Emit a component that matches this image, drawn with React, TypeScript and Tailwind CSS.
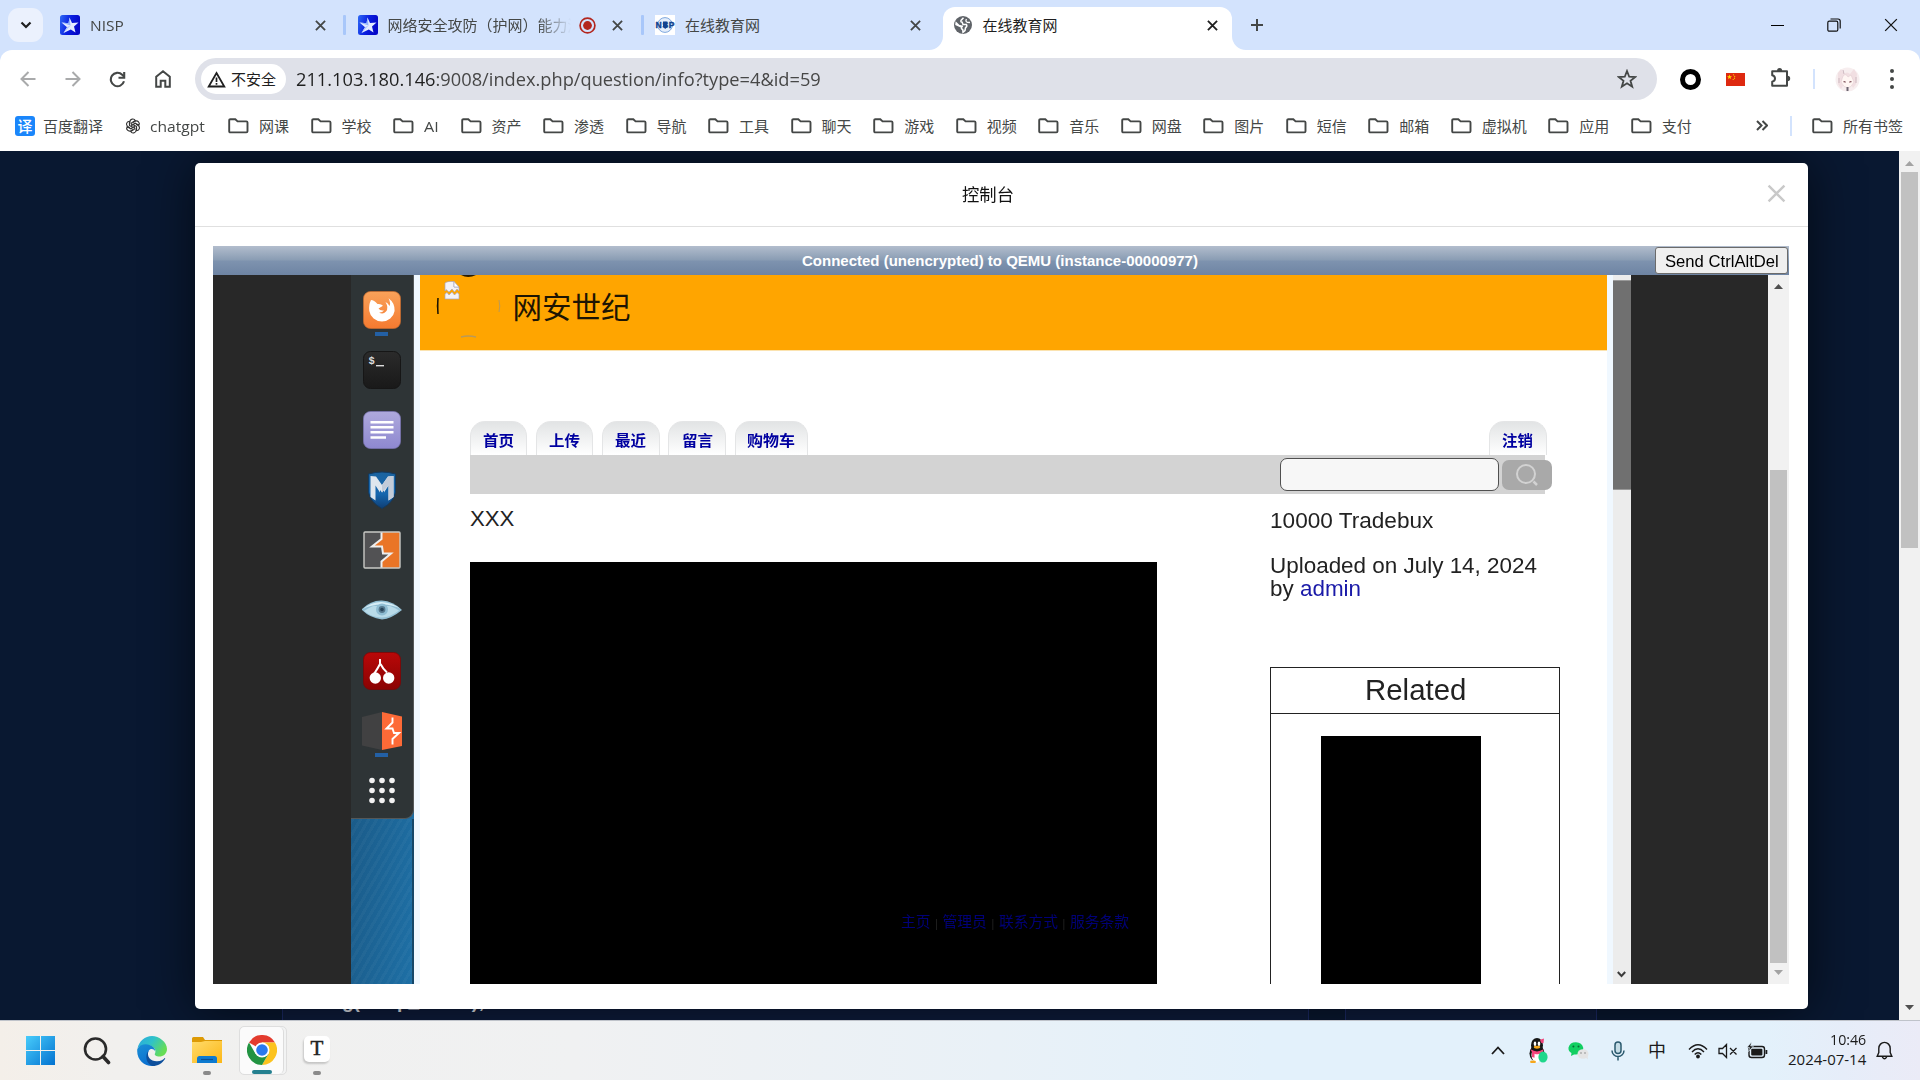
import React, { useLayoutEffect, useRef, useState } from "react";

type Kids = { children?: React.ReactNode };

/** A single line of text that is squeezed or stretched to a fixed width. */
function Fit({ w, className = "", children }: Kids & { w: number; className?: string }) {
  const ref = useRef<HTMLSpanElement>(null);
  const [s, setS] = useState(1);
  useLayoutEffect(() => {
    if (ref.current && ref.current.offsetWidth) setS(w / ref.current.offsetWidth);
  }, [w]);
  return (
    <span className={"block shrink-0 whitespace-nowrap " + className} style={{ width: w }}>
      <span ref={ref} className="inline-block origin-left whitespace-pre" style={{ transform: `scaleX(${s})` }}>
        {children}
      </span>
    </span>
  );
}

const Cross = ({ size = 11, sw = 2, color = "#444746" }: { size?: number; sw?: number; color?: string }) => (
  <svg width={size} height={size} viewBox="0 0 12 12" className="shrink-0">
    <path d="M1 1 11 11M11 1 1 11" stroke={color} strokeWidth={sw} />
  </svg>
);

const StarLogo = () => (
  <svg width="20" height="20" viewBox="0 0 20 20" className="shrink-0">
    <defs>
      <linearGradient id="sl" x1="0" y1="0" x2="1" y2="0.3">
        <stop offset="0" stopColor="#2f6bf5" />
        <stop offset="0.55" stopColor="#0a1fe0" />
        <stop offset="1" stopColor="#0508c8" />
      </linearGradient>
    </defs>
    <rect width="20" height="20" rx="2.5" fill="url(#sl)" />
    <path d="M9.500 2.500 12 8 18.500 7.500 14 11.500 15.500 17.500 10.800 14.500 3.500 18 7 12.200 1.500 7.500 8.500 8.300Z" fill="#e3ebff" />
    <path d="M9.500 2.500 10.500 10.600 1.500 7.500 8.500 8.300Z" fill="#8fb2ff" />
    <path d="M10.500 10.600 3.500 18 7 12.200Z" fill="#a9c2ff" />
  </svg>
);

const NopLogo = () => (
  <svg width="20" height="20" viewBox="0 0 20 20" className="shrink-0">
    <rect width="20" height="20" fill="#fff" />
    <circle cx="10" cy="10" r="7.4" fill="#e4eefb" stroke="#7fa8de" strokeWidth="1" />
    <path d="M8 6.5h4.400v5L10.200 14 8 11.500z" fill="#12438f" />
    <text x="0.5" y="13" fontSize="8.5" fontWeight="900" fill="#12438f" stroke="#12438f" strokeWidth=".4" fontFamily="Liberation Sans, sans-serif" textLength="19">
      NSP
    </text>
  </svg>
);

const Globe = () => (
  <svg width="18" height="18" viewBox="0 0 18 18" className="mx-px shrink-0">
    <circle cx="9" cy="9" r="9" fill="#5f6368" />
    <path d="M9.500 1.800 7 4.500Q6.500 6.200 8.200 6.300L9 8.500H12.500Q13.500 10.500 11.500 11.800L11 14.500 9 16.200 8.700 13.500Q7 13 7.500 11L2 8.500 2.200 6.800 5 9.500 9 10.500" fill="#fff" fillOpacity="0" stroke="#fff" strokeWidth="1.500" />
    <path d="M12.500 3.200Q11 5.500 13.500 6.300L16 6.500" fill="none" stroke="#fff" strokeWidth="1.300" />
  </svg>
);

function Tab({ icon, title, w, active, sep, children }: Kids & { icon: React.ReactNode; title: string; w: number; active?: boolean; sep?: boolean }) {
  return (
    <div className="flex h-[50px] w-[297.5px] shrink-0 items-end">
      <div
        className={
          "relative flex h-[43px] shrink-0 items-center pb-[7px] " +
          (active ? "ml-[1.5px] w-[289px] rounded-t-[12px] bg-white pl-[9.5px]" : "w-[294px] pl-[11px]")
        }
      >
        {active && (
          <>
            <svg className="absolute bottom-0 -left-[14px]" width="14" height="14">
              <path d="M14 0V14H0A14 14 0 0 0 14 0Z" fill="#fff" />
            </svg>
            <svg className="absolute -right-[14px] bottom-0" width="14" height="14">
              <path d="M0 0V14H14A14 14 0 0 1 0 0Z" fill="#fff" />
            </svg>
          </>
        )}
        {icon}
        <div className="ml-[10px] flex w-[224.5px] shrink-0 items-center">
          <div className={children ? "w-[183px] overflow-hidden [mask-image:linear-gradient(to_right,black_82%,transparent)]" : ""}>
            <Fit w={w} className={"text-[15px] leading-5 " + (active ? "text-[#1f1f1f]" : "text-[#444746]")}>
              {title}
            </Fit>
          </div>
          {children}
        </div>
        <Cross color={active ? "#1f1f1f" : "#444746"} />
      </div>
      {sep && <div className="mb-[15px] h-5 w-[3px] shrink-0 rounded-[1px] bg-[#a8c7fa]" />}
    </div>
  );
}

const FolderIcon = () => (
  <svg width="21" height="16" viewBox="0 0 21 16" className="shrink-0">
    <path d="M1.200 13.200V2.400Q1.200 1.200 2.400 1.200H7.300L9.600 3.400H18.300Q19.500 3.400 19.500 4.600V13.200Q19.500 14.400 18.300 14.400H2.400Q1.200 14.400 1.200 13.200Z" fill="none" stroke="#444746" strokeWidth="1.900" />
  </svg>
);

const Bookmark = ({ t, w }: { t: string; w: number }) => (
  <div className="mr-[21.530px] flex shrink-0 items-center gap-[10px]">
    <FolderIcon />
    <Fit w={w}>{t}</Fit>
  </div>
);

const bookmarks: [string, number][] = [
  ["网课", 30], ["学校", 30], ["AI", 15], ["资产", 30], ["渗透", 30], ["导航", 30], ["工具", 30], ["聊天", 30], ["游戏", 30],
  ["视频", 30], ["音乐", 30], ["网盘", 30], ["图片", 30], ["短信", 30], ["邮箱", 30], ["虚拟机", 45], ["应用", 30], ["支付", 30],
];

/** A box of a given width that centres its content. */
const Slot = ({ w, children, className = "" }: Kids & { w: number; className?: string }) => (
  <div className={"flex h-full shrink-0 items-center justify-center " + className} style={{ width: w }}>
    {children}
  </div>
);

function Browser() {
  return (
    <header className="h-[151px] bg-[#d3e3fd]">
      <div className="flex h-[50px]">
        <div className="mt-2 mr-[6px] ml-2 flex h-[34px] w-[35px] items-center justify-center rounded-[11px] bg-[#ebf1fd]">
          <svg width="12" height="8" viewBox="0 0 12 8">
            <path d="M1.500 1.500 6 6 10.500 1.500" fill="none" stroke="#1f1f1f" strokeWidth="2.200" />
          </svg>
        </div>
        <Tab icon={<StarLogo />} title="NISP" w={34} sep />
        <Tab icon={<StarLogo />} title="网络安全攻防（护网）能力测" w={195} sep>
          <svg width="17" height="17" viewBox="0 0 17 17" className="ml-[8px] shrink-0">
            <circle cx="8.500" cy="8.500" r="7.400" fill="none" stroke="#b3261e" strokeWidth="1.700" />
            <circle cx="8.500" cy="8.500" r="4.400" fill="#b3261e" />
          </svg>
        </Tab>
        <Tab icon={<NopLogo />} title="在线教育网" w={75} />
        <Tab icon={<Globe />} title="在线教育网" w={75} active />
        <div className="ml-[11px] flex items-center">
          <svg width="14" height="14" viewBox="0 0 14 14">
            <path d="M7 1V13M1 7H13" stroke="#444746" strokeWidth="2" />
          </svg>
        </div>
        <div className="ml-auto flex w-[171px] items-center">
          <Slot w={57}><div className="h-px w-[13px] bg-black" /></Slot>
          <Slot w={55}>
            <svg width="14" height="14" viewBox="0 0 14 14" fill="none" stroke="#111" strokeWidth="1.200">
              <rect x="0.800" y="3.200" width="10" height="10" rx="1.500" />
              <path d="M3.500 1H11Q13.200 1 13.200 3.200V10.500" />
            </svg>
          </Slot>
          <Slot w={59}><Cross size={14} sw={1.100} color="#111" /></Slot>
        </div>
      </div>

      <div className="h-[101px] rounded-t-[12px] bg-white">
        <div className="flex h-[50px] items-center pt-[8px]">
          <div className="flex w-[195px] shrink-0 items-center pl-[5px]">
            <Slot w={45}>
              <svg width="16" height="16" viewBox="0 0 16 16" fill="none" stroke="#a9aaab" strokeWidth="2"><path d="M8.500 1 1.500 8l7 7M1.500 8H15.500" /></svg>
            </Slot>
            <Slot w={45}>
              <svg width="16" height="16" viewBox="0 0 16 16" fill="none" stroke="#a9aaab" strokeWidth="2"><path d="M7.500 1l7 7-7 7M14.500 8H.5" /></svg>
            </Slot>
            <Slot w={45}>
              <svg width="17" height="17" viewBox="0 0 17 17" fill="none" stroke="#444746" strokeWidth="2.100"><path d="M15 10.300A6.700 6.700 0 1 1 13.200 3.700L15 5.500" /><path d="M15.200 1V6.700H9.500" /></svg>
            </Slot>
            <Slot w={45}>
              <svg width="16" height="18" viewBox="0 0 16 18" fill="none" stroke="#444746" strokeWidth="2"><path d="M1.200 16.700V6.700L8 1.300 14.800 6.700V16.700H10.300V10.700H5.700V16.700Z" /></svg>
            </Slot>
          </div>
          <div className="flex h-[42px] w-[1462px] shrink-0 items-center rounded-full bg-[#dfe1e9] pl-[6px]">
            <div className="flex h-[30px] w-[85px] items-center rounded-full bg-white pl-[6px]">
              <svg width="19" height="17" viewBox="0 0 19 17">
                <path d="M9.500 2 17.300 15.500H1.700Z" fill="none" stroke="#1f1f1f" strokeWidth="1.800" />
                <path d="M9.500 6.500V11M9.500 12V13.800" stroke="#1f1f1f" strokeWidth="1.700" />
              </svg>
              <Fit w={45} className="ml-[5px] text-[15px] leading-5 text-[#1f1f1f]">不安全</Fit>
            </div>
            <Fit w={525} className="ml-[10px] text-[18px] leading-6 text-[#474747]">
              <span className="text-[#1f1f1f]">211.103.180.146</span>:9008/index.php/question/info?type=4&amp;id=59
            </Fit>
            <svg width="20" height="20" viewBox="0 0 20 20" className="mr-[20px] ml-auto">
              <path d="M10 2 12.200 7.700 18.300 8 13.500 11.800 15.200 17.700 10 14.300 4.800 17.700 6.500 11.800 1.700 8 7.800 7.700Z" fill="none" stroke="#444746" strokeWidth="1.800" />
            </svg>
          </div>
          <div className="flex flex-1 items-center pl-[11px]">
            <Slot w={44}><div className="size-[21px] rounded-full border-[5.500px] border-black bg-white" /></Slot>
            <Slot w={46}>
              <svg width="19" height="13" viewBox="0 0 19 13"><rect width="19" height="13" fill="#de2910" /><path d="M3.500 1.500 4.200 3.300H6L4.500 4.400 5 6.200 3.500 5.100 2 6.200 2.500 4.400 1 3.300H2.800Z" fill="#ffde00" /><circle cx="7.500" cy="1.800" r=".6" fill="#ffde00" /><circle cx="8.700" cy="3.300" r=".6" fill="#ffde00" /><circle cx="8.500" cy="5.200" r=".6" fill="#ffde00" /><circle cx="7.200" cy="6.500" r=".6" fill="#ffde00" /></svg>
            </Slot>
            <Slot w={46}>
              <svg width="22" height="22" viewBox="0 0 22 22" className="mb-1">
                <path d="M2.200 5.200H17V19.800H2.200V15.700Q5 15 5 12.500T2.200 9.300Z" fill="none" stroke="#444746" strokeWidth="2" strokeLinejoin="round" />
                <path d="M7 5A2.600 2.900 0 0 1 12.200 5ZM17.500 9.800A2.700 2.700 0 0 1 17.500 15.200Z" fill="#444746" />
              </svg>
            </Slot>
            <Slot w={20}><div className="h-5 w-[2px] bg-[#d3e3fd]" /></Slot>
            <Slot w={46}>
              <svg width="25" height="25" viewBox="0 0 25 25">
                <circle cx="12.500" cy="12.500" r="12" fill="#f7eeef" />
                <path d="M3 6 6 2 9 7Q12 4 15 7L19 2 22 7 21 17 18 21 16 17H9L6 22 3 17Z" fill="#f1dfe2" />
                <path d="M6 15 8 9Q11 6 13 10L16 8 19 15Q16 21 12.500 21T6 15Z" fill="#fff6f3" stroke="#e3cdd1" strokeWidth=".6" />
                <path d="M8.500 15Q9.500 14 10.500 15.500M14.500 15.500Q15.500 14 16.500 15" stroke="#8a6068" strokeWidth="1.200" fill="none" />
                <path d="M11.500 20H13.500V24H11.500Z" fill="#6b6470" /><path d="M4 11V16M21 10V16M8 3 9 7" stroke="#cdb9c0" strokeWidth="1" />
              </svg>
            </Slot>
            <Slot w={44}>
              <div className="flex flex-col gap-[4px]">
                <i className="size-1 rounded-full bg-[#444746]" /><i className="size-1 rounded-full bg-[#444746]" /><i className="size-1 rounded-full bg-[#444746]" />
              </div>
            </Slot>
          </div>
        </div>
        <div className="flex h-[51px] items-center pl-[15px] text-[15px] leading-5 text-[#444746]">
          <div className="flex size-5 items-center justify-center rounded-[3px] bg-[#1a86fb] text-[15px] font-medium text-white">译</div>
          <Fit w={60} className="ml-2">百度翻译</Fit>
          <svg width="16" height="16" viewBox="0 0 16 16" className="ml-[22px] shrink-0" fill="none" stroke="#333" strokeWidth="1.150">
            {[0, 60, 120, 180, 240, 300].map((a) => (
              <path key={a} transform={`rotate(${a} 8 8)`} d="M4.900 6.200V3.800A2.900 2.900 0 0 1 10.300 2.500L6.700 4.700V8.700" />
            ))}
          </svg>
          <Fit w={55} className="mr-[23px] ml-[9px]">chatgpt</Fit>
          {bookmarks.map(([t, w]) => <Bookmark key={t} t={t} w={w} />)}
          <div className="mr-[17px] ml-auto flex items-center">
            <svg width="12" height="11" viewBox="0 0 12 11" fill="none" stroke="#444746" strokeWidth="2"><path d="M1 1 5.500 5.500 1 10M6.500 1 11 5.500 6.500 10" /></svg>
            <div className="mr-[20px] ml-[22px] h-5 w-[2.500px] bg-[#d3e3fd]" />
            <FolderIcon />
            <Fit w={60} className="ml-[10px]">所有书签</Fit>
          </div>
        </div>
      </div>
    </header>
  );
}

const Arrow = ({ down, c }: { down?: boolean; c: string }) => (
  <svg width="9" height="5" viewBox="0 0 9 5" className="shrink-0"><path d={down ? "M0 0H9L4.500 5Z" : "M0 5H9L4.500 0Z"} fill={c} /></svg>
);

const dockIcons: React.ReactNode[] = [
  <svg key="ff" width="38" height="38" viewBox="0 0 38 38">
    <defs><linearGradient id="ff" x1="0" y1="0" x2="0" y2="1"><stop offset="0" stopColor="#f9a25a" /><stop offset="1" stopColor="#f57a30" /></linearGradient></defs>
    <rect x=".5" y=".5" width="37" height="37" rx="7" fill="url(#ff)" stroke="#c86b2e" strokeWidth=".7" />
    <path d="M8 9Q5.500 14 6.300 20A12.800 12.500 0 0 0 31.600 20Q32 12 25.500 7.300Q28 12 26.500 15Q25 12 22.500 11Q26 17 23 20.500Q20 24 16 21.500Q19 22 21 19.500Q17 20 15.500 17.500L20 14.800Q18 12.500 14.500 13Q11 9 8 9Z" fill="#fff" />
  </svg>,
  <svg key="term" width="38" height="38" viewBox="0 0 38 38">
    <defs><linearGradient id="tm" x1="0" y1="0" x2="0" y2="1"><stop offset="0" stopColor="#2b2b2b" /><stop offset="1" stopColor="#191919" /></linearGradient></defs>
    <rect x=".5" y=".5" width="37" height="37" rx="7" fill="url(#tm)" stroke="#161616" />
    <text x="5.500" y="13" fontSize="10.500" fontWeight="bold" fill="#ddd" fontFamily="Liberation Mono, monospace">$</text>
    <rect x="13" y="14" width="8" height="1.400" fill="#ddd" />
  </svg>,
  <svg key="txt" width="38" height="38" viewBox="0 0 38 38">
    <defs><linearGradient id="tx" x1="0" y1="0" x2="0" y2="1"><stop offset="0" stopColor="#aea9dc" /><stop offset="1" stopColor="#8e88d0" /></linearGradient></defs>
    <rect x=".5" y=".5" width="37" height="37" rx="7" fill="url(#tx)" stroke="#7b76b5" strokeWidth=".7" />
    <path d="M7.500 11.300H30.500M7.500 16.300H30.500M7.500 21.300H30.500M7.500 26.500H23" stroke="#fff" strokeWidth="2.400" />
  </svg>,
  <svg key="msf" width="38" height="38" viewBox="0 0 38 38">
    <defs><linearGradient id="ms" x1="0" y1="0" x2="0" y2="1"><stop offset="0" stopColor="#1b639f" /><stop offset=".6" stopColor="#1666ae" /><stop offset="1" stopColor="#0f3e74" /></linearGradient></defs>
    <path d="M5.500 3Q19-1 32.500 3V21Q31 31 19 37.500Q7 31 5.500 21Z" fill="url(#ms)" stroke="#123a61" />
    <path d="M7.500 5 13 5.500 19 14 25 5.500 30.500 5V26L25.500 29.500V14.500L21 21.500V19L19 21.500 17 19V21.500L12.500 14.500V29.500L7.500 26Z" fill="#dfe6ee" />
    <path d="M25 5.500 30.500 5V26L25.500 29.500V14.500L19 21.500V14Z" fill="#c3cbd8" />
  </svg>,
  <svg key="burp" width="38" height="38" viewBox="0 0 38 38">
    <rect x="1" y="1" width="36" height="36" fill="#525254" />
    <path d="M18.500 1V8L9 15.500H19L20 22.500H28L18.500 30.500V37H37V1Z" fill="#ea7527" />
    <path d="M18.500 1V8L9 15.500H19L20 22.500H28L18.500 30.500V37" fill="none" stroke="#eee" strokeWidth="2" />
    <rect x="1" y="1" width="36" height="36" rx="1" fill="none" stroke="#c9c9c5" strokeWidth="1.400" />
  </svg>,
  <svg key="eye" width="42" height="38" viewBox="0 0 42 38">
    <path d="M1 18Q10 9 21 9.500T41 19Q30 28 21 28.500Q9 27 1 19Z" fill="#93bfd4" />
    <path d="M2 18Q11 10.500 21 11T40 18Q32 13.500 21 13.500T2 18Z" fill="#d7edf6" />
    <path d="M3 20Q11 15 13 15H29Q33 16 38 19.500Q30 26 21 26.500T3 20Z" fill="#b9dbe9" />
    <circle cx="21" cy="18.500" r="6" fill="#8fbdd3" /><circle cx="21" cy="18.500" r="3.400" fill="#55788e" /><circle cx="21" cy="18.500" r="1.800" fill="#27445a" />
  </svg>,
  <svg key="cherry" width="38" height="38" viewBox="0 0 38 38">
    <defs><linearGradient id="ch" x1="0" y1="0" x2="0" y2="1"><stop offset="0" stopColor="#b90808" /><stop offset="1" stopColor="#8a0303" /></linearGradient></defs>
    <rect x=".5" y=".5" width="37" height="37" rx="7" fill="url(#ch)" stroke="#7c0505" strokeWidth=".8" />
    <path d="M17 7V12Q15 16 11 22M17.500 12Q20 17 24 20.500" stroke="#fff" strokeWidth="2" fill="none" />
    <circle cx="12.300" cy="26" r="5.700" fill="#fff" /><circle cx="25.700" cy="26" r="5.700" fill="#fff" />
  </svg>,
  <svg key="burp2" width="42" height="38" viewBox="0 0 42 38">
    <path d="M1 5 21 0V38L1 33.500Z" fill="#414142" />
    <path d="M21 0 41 4.500V34L21 38Z" fill="#fd6a37" />
    <path d="M31.500 5.500V10.500L25.500 16.500H31.500L33 21H38L31.500 27V32.500" fill="none" stroke="#fff" strokeWidth="1.900" />
  </svg>,
  <svg key="grid" width="38" height="38" viewBox="0 0 38 38">
    {[9, 19, 29].map((x) => [8.500, 18.500, 28.500].map((y) => <circle key={x + "-" + y} cx={x} cy={y} r="2.800" fill="#f2f2f2" />))}
  </svg>,
];

const ShopTab = ({ t, w, tw }: { t: string; w: number; tw: number }) => (
  <div className="flex h-[34px] shrink-0 items-center justify-center rounded-t-[15px] border border-b-0 border-[#e4e5e6] bg-gradient-to-b from-[#e2e4e5] to-white pt-[3px] text-[15px] leading-5 font-bold text-[#0000a0]" style={{ width: w }}>
    <Fit w={tw}>{t}</Fit>
  </div>
);

const Bar = () => <span className="text-[11.500px] text-[#262626]"> | </span>;

function RemoteScreen() {
  return (
    <div className="flex h-[709px] overflow-hidden bg-[#282828]">
      <div className="ml-[138px] flex w-[62.500px] shrink-0 flex-col bg-gradient-to-br from-[#184f78] to-[#1e70a6]">
        <div className="flex h-[544px] shrink-0 flex-col items-center overflow-hidden rounded-br-[9px] border-r border-b border-[#545859] bg-[#2e3436] pt-4">
          {dockIcons.map((ic, i) => (
            <div key={i} className="flex h-[60.100px] shrink-0 flex-col items-center">
              {ic}
              {(i === 0 || i === 7) && <div className="mt-[3px] h-1 w-[13px] bg-[#2360a5]" />}
            </div>
          ))}
        </div>
        <div className="flex-1 border-r-2 border-[#164768] bg-[repeating-linear-gradient(120deg,rgba(255,255,255,0.03)_0_3px,transparent_3px_7px)]" />
      </div>
      <div className="w-[6.500px] shrink-0 bg-[#f0f8ff]" />
      <div className="flex w-[1187px] shrink-0 flex-col bg-white">
        <div className="flex h-[76px] shrink-0 items-start overflow-hidden border-b border-[#fbe3b0] bg-[#ffa500]">
          <svg width="80" height="70" viewBox="0 0 80 70" className="ml-[10px] shrink-0">
            <path d="M31 0H46Q38 4 31 0Z" fill="#2a1c00" />
            <path d="M8 23Q6.500 31 8 39Z" fill="#1a1200" stroke="#1a1200" />
            <path d="M69 25Q70.500 31 69 37" fill="none" stroke="#b99a5a" />
            <path d="M31 62Q38 60 46 62" fill="none" stroke="#b99a5a" strokeWidth="1.500" />
            <path d="M15 8Q17 6 24 6.500V12H29V16L27 14 24.500 17 22 14 19 17 16 14.500 15 16ZM15 19 17 17.500 19 20 22 17 24.500 20 27 17.500 29 19V24H15Z" fill="#f4f2f6" stroke="#a7a6c0" strokeWidth=".7" />
            <path d="M24 6.500V12H29Z" fill="#fff" stroke="#a7a6c0" strokeWidth=".7" />
          </svg>
          <Fit w={118} className="mt-[12px] ml-[2.500px] text-[29.500px] leading-10 text-[#1d1503]">网安世纪</Fit>
        </div>
        <div className="mt-[70px] ml-[49.500px] flex h-[34px] w-[1077px] shrink-0 gap-[8.800px]">
          <ShopTab t="首页" w={57.500} tw={31} />
          <ShopTab t="上传" w={57.500} tw={31} />
          <ShopTab t="最近" w={57.500} tw={31} />
          <ShopTab t="留言" w={57.500} tw={31} />
          <ShopTab t="购物车" w={73} tw={48} />
          <div className="ml-auto"><ShopTab t="注销" w={57.500} tw={31} /></div>
        </div>
        <div className="ml-[50px] flex h-[39px] w-[1074.500px] shrink-0 items-center bg-[#d3d3d3] pl-[810px]">
          <div className="h-[33px] w-[219px] shrink-0 rounded-[7px] border-[1.500px] border-[#505050] bg-[#f7f7f7]" />
          <div className="ml-[3px] flex h-[30px] w-[50px] shrink-0 items-center justify-center rounded-[7px] bg-[#a9a9a9]">
            <svg width="24" height="24" viewBox="0 0 24 24" fill="none" stroke="#d2d2d2" strokeWidth="2"><circle cx="11" cy="11" r="9" /><path d="M18.500 18.500 22 22" strokeWidth="2.500" /></svg>
          </div>
        </div>
        <div className="ml-[50px] flex min-h-0 flex-1 text-[22.200px] leading-[22.500px] text-[#222]">
          <div className="w-[800px]">
            <Fit w={44} className="mt-[14px] font-[Liberation_Sans]">XXX</Fit>
            <div className="mt-[31.500px] flex h-[430px] w-[687px] flex-col bg-black pt-[349px] pl-[430.500px]">
              <Fit w={228} className="text-[15px] leading-5 text-[#000078]">
                主页<Bar />管理员<Bar />联系方式<Bar />服务条款
              </Fit>
            </div>
          </div>
          <div className="w-[290px] pt-[16px] font-[Liberation_Sans]">
            <Fit w={163}>10000 Tradebux</Fit>
            <Fit w={267} className="mt-[22.500px]">Uploaded on July 14, 2024</Fit>
            <Fit w={91}>by <span className="text-[#1a1aa8]">admin</span></Fit>
            <div className="mt-[67px] h-[400px] border border-[#222]">
              <div className="flex h-[46px] items-center justify-center border-b border-[#222] text-[30px]">
                <Fit w={101}>Related</Fit>
              </div>
              <div className="mt-[22px] ml-[50px] h-[330px] w-[160px] bg-black" />
            </div>
          </div>
        </div>
      </div>
      <div className="w-[6px] shrink-0 bg-[#f0f8ff]" />
      <div className="flex w-[18px] shrink-0 flex-col items-center bg-[#ececec] pt-[5px] pb-[6px]">
        <div className="h-[210px] w-full border-y border-[#999] bg-[#707070]" />
        <svg width="9" height="7" viewBox="0 0 9 7" className="mt-auto mr-[2px]"><path d="M.8 1 4.500 5 8.200 1" fill="none" stroke="#3c3c3c" strokeWidth="2" /></svg>
      </div>
      <div className="ml-auto flex w-[21px] shrink-0 flex-col items-center bg-[#f1f1f1] pt-[9px] pb-[9px]">
        <Arrow c="#505050" />
        <div className="mt-[181px] h-[493px] w-[17px] bg-[#c1c1c1]" />
        <div className="mt-auto"><Arrow down c="#a3a3a3" /></div>
      </div>
    </div>
  );
}

function Modal() {
  return (
    <div className="relative mt-3 h-[846px] w-[1613px] shrink-0 rounded-[5px] bg-white shadow-[1px_1px_50px_rgba(0,0,0,0.6)]">
      <div className="flex h-[64px] items-center border-b border-[#e0e0e0] pl-[767px]">
        <Fit w={52} className="text-[17px] leading-6 text-[#111]">控制台</Fit>
        <div className="mr-[22px] mb-[3px] ml-auto"><Cross size={19} sw={1.500} color="#c9c9c9" /></div>
      </div>
      <div className="mt-[19px] mr-[19px] ml-[18px]">
        <div className="flex h-[29px] items-center bg-[linear-gradient(to_bottom,#b2bdcd_0%,#899cb3_49%,#7e93af_51%,#6e84a3_100%)] pl-[589px] font-[Liberation_Sans]">
          <Fit w={396} className="text-[15px] leading-5 font-bold text-white">Connected (unencrypted) to QEMU (instance-00000977)</Fit>
          <div className="mr-[1px] ml-auto flex h-[27px] w-[133px] items-center justify-center rounded-[3px] border border-[#6b6b6b] bg-[#efefef] text-[16.500px] leading-5 text-black">
            <Fit w={114}>Send CtrlAltDel</Fit>
          </div>
        </div>
        <RemoteScreen />
      </div>
    </div>
  );
}

const Chrome = () => (
  <svg width="30" height="30" viewBox="0 0 48 48">
    <path d="M24 24 3.200 12A24 24 0 0 1 44.800 12L24 12Z" fill="#e33b2e" />
    <path d="M44.800 12A24 24 0 0 1 24 48L34.400 30 34.400 18 24 12Z" fill="#fcc31e" />
    <path d="M3.200 12A24 24 0 0 0 24 48L34.400 30 24 34 13.600 30Z" fill="#229342" />
    <circle cx="24" cy="24" r="12" fill="#fff" /><circle cx="24" cy="24" r="9.300" fill="#2a79ee" />
  </svg>
);

const Edge = () => (
  <svg width="30" height="30" viewBox="0 0 30 30">
    <defs>
      <linearGradient id="e1" x1="0" y1="0" x2="1" y2=".5"><stop offset="0" stopColor="#2aa7e0" /><stop offset=".5" stopColor="#2fc2c9" /><stop offset="1" stopColor="#66dd55" /></linearGradient>
      <linearGradient id="e2" x1="0" y1="0" x2=".4" y2="1"><stop offset="0" stopColor="#1a8fd6" /><stop offset="1" stopColor="#0b70cf" /></linearGradient>
    </defs>
    <path d="M.5 12.500C2 5 8 0 15 0S30 6 30 13C30 18 26 20.500 22.500 20.500C19 20.500 17 19 18 17.500C19 15.500 18.500 12 15 10.500C9 8 3 9 .5 12.500Z" fill="url(#e1)" />
    <path d="M.3 13C3 8 9 7.500 12.500 9C16 10.500 18.500 12.500 18 15C17 12.500 13 12 11.500 15C9.500 19.500 12 26.500 18 29.700C9 31.500-1 25 .3 13Z" fill="url(#e2)" />
    <path d="M11.700 14.500C9 21 14 25.500 20 25.300C24 25.200 26.500 23.500 27.500 22.300C28 21.800 28.500 22.300 28 23C25 27.500 21 30 15.500 30C9 28 7.500 19 11.700 14.500Z" fill="#0d4f9c" />
  </svg>
);

const TaskSlot = ({ w, mark, children }: Kids & { w: number; mark?: string }) => (
  <div className="flex h-[60px] flex-col items-center pt-[15px]" style={{ width: w }}>
    <div className="flex h-[30px] items-center">{children}</div>
    {mark && <div className={"mt-[5px] h-1 rounded-full " + mark} />}
  </div>
);

function Taskbar() {
  return (
    <footer className="flex h-[60px] items-center border-t border-[#bfc3ca] bg-[linear-gradient(to_right,#f4efe9_0%,#f1f0ee_6%,#f0f1f2_30%,#e9f1f7_52%,#e3f1fb_66%,#e3f1fb_92%,#e6edf9_96%,#ebebf7_100%)]">
      <div className="ml-[13px] flex">
        <TaskSlot w={55}>
          <svg width="29" height="29" viewBox="0 0 29 29">
            <defs><linearGradient id="wn" x1="0" y1="0" x2="1" y2="1"><stop offset="0" stopColor="#48ccfb" /><stop offset="1" stopColor="#0372d0" /></linearGradient></defs>
            <path d="M0 0H14V14H0ZM15 0H29V14H15ZM0 15H14V29H0ZM15 15H29V29H15Z" fill="url(#wn)" />
          </svg>
        </TaskSlot>
        <TaskSlot w={58}>
          <svg width="28" height="28" viewBox="0 0 28 28" fill="none" stroke="#2a2a2a"><circle cx="12.500" cy="12" r="10.500" strokeWidth="2.600" /><path d="M20 19.500 25.500 25.500" strokeWidth="3.600" strokeLinecap="round" /></svg>
        </TaskSlot>
        <TaskSlot w={52}><Edge /></TaskSlot>
        <TaskSlot w={58} mark="w-2 bg-[#8a8a8a]">
          <svg width="30" height="27" viewBox="0 0 30 27">
            <defs><linearGradient id="fo" x1="0" y1="0" x2="1" y2="1"><stop offset="0" stopColor="#ffdb6b" /><stop offset="1" stopColor="#fcb716" /></linearGradient></defs>
            <path d="M0 1.500Q0 0 1.500 0H11L13 3H30V9H0Z" fill="#dd9a05" />
            <path d="M0 5H9L13 4H30V26H0Z" fill="url(#fo)" />
            <path d="M5 26V21.500Q5 19 7.500 19H22.500Q25 19 25 21.500V26Z" fill="#0d7ad0" /><path d="M9 22.500H21" stroke="#0a4f94" strokeWidth="1.200" />
          </svg>
        </TaskSlot>
        <div className="mt-[5px] ml-[3px] flex h-[49px] w-[48px] rounded-[5px] border border-[#dedede] bg-[#f2f3f3]">
          <div className="flex w-[44px] flex-col items-center rounded-[5px] border-r border-[#dcdcdc] bg-[#fbfbfb] pt-[8px]">
            <Chrome />
            <div className="mt-[5px] h-1 w-5 rounded-full bg-[#24808f]" />
          </div>
        </div>
        <TaskSlot w={60} mark="w-2 bg-[#8a8a8a]">
          <div className="mb-1 flex size-[26px] items-center justify-center rounded-[5px] bg-white font-[Liberation_Serif] text-[21px] leading-none text-[#222] shadow-[-1px_2px_2px_rgba(0,0,0,0.18)] [-webkit-text-stroke:0.500px_#222]">T</div>
        </TaskSlot>
      </div>
      <div className="ml-auto flex h-full items-center text-[#1a1a1a]">
        <Slot w={36}><svg width="14" height="9" viewBox="0 0 14 9"><path d="M1 8 7 1.500 13 8" fill="none" stroke="#1a1a1a" strokeWidth="1.800" /></svg></Slot>
        <Slot w={44}>
          <svg width="20" height="25" viewBox="0 0 20 21" preserveAspectRatio="none">
            <ellipse cx="9" cy="13" rx="7.500" ry="7" fill="#111" /><ellipse cx="9" cy="14.500" rx="5.500" ry="6" fill="#fff" /><ellipse cx="9" cy="6" rx="6" ry="6" fill="#161616" />
            <ellipse cx="7" cy="4.800" rx="1.300" ry="1.900" fill="#fff" /><ellipse cx="11" cy="4.800" rx="1.300" ry="1.900" fill="#fff" /><ellipse cx="9" cy="7.800" rx="3.200" ry="1.200" fill="#f6a81c" />
            <path d="M2.500 9.500Q9 13 15.500 9.500L15 12.500Q10 14.500 6.500 13.300V16.500L4 16V12Z" fill="#f2457c" /><path d="M12 1.500 16 .5 15.500 4.500 13 4Z" fill="#f2457c" />
            <ellipse cx="5" cy="20" rx="3" ry="1.200" fill="#f6a81c" /><circle cx="15" cy="16" r="4.600" fill="#1fd78b" />
          </svg>
        </Slot>
        <Slot w={36}>
          <svg width="21" height="18" viewBox="0 0 21 18">
            <path d="M3 14 3.500 11Q0 9 .5 5.500Q2 0 8 .2T15.300 6Q15 12 8 12.500H6Z" fill="#12cf62" /><circle cx="5.400" cy="4.600" r="1" fill="#0a6b35" /><circle cx="10.500" cy="4.600" r="1" fill="#0a6b35" />
            <ellipse cx="15" cy="12" rx="5.500" ry="4.800" fill="#e4e4e4" /><circle cx="13" cy="11" r=".8" fill="#888" /><circle cx="17" cy="11" r=".8" fill="#888" /><path d="M17 15 20 17.500 19.500 13Z" fill="#e4e4e4" />
          </svg>
        </Slot>
        <Slot w={44}><svg width="14" height="20" viewBox="0 0 14 20" fill="none" stroke="#2b5a6e" strokeWidth="1.500"><rect x="4" y="1" width="6" height="11.500" rx="3" fill="#c5dde6" /><path d="M1 9.500A6 6 0 0 0 13 9.500M7 15.500V19.500" /></svg></Slot>
        <Slot w={34} className="text-[18px]">中</Slot>
        <Slot w={47}>
          <svg width="20" height="16" viewBox="0 0 20 16" fill="none" stroke="#1a1a1a" strokeWidth="1.400"><path d="M1 6.500Q10-3 19 6.500M4 9Q10 2.500 16 9M6.700 11.500Q10 8 13.300 11.500" /><circle cx="10" cy="13.500" r="1.200" fill="#1a1a1a" /></svg>
        </Slot>
        <Slot w={13}>
          <svg width="20" height="16" viewBox="0 0 20 16" fill="none" stroke="#1a1a1a" strokeWidth="1.300" className="shrink-0"><path d="M1 5.500H4.500L8.500 1.500V14.500L4.500 10.500H1ZM12 5 18.500 11.500M18.500 5 12 11.500" /></svg>
        </Slot>
        <Slot w={46}>
          <svg width="21" height="17" viewBox="0 0 21 17"><rect x="2" y="4.500" width="15.500" height="11" rx="2.500" fill="none" stroke="#1a1a1a" strokeWidth="1.400" /><rect x="4.200" y="6.700" width="11.200" height="6.700" rx="1" fill="#1a1a1a" /><path d="M18.500 8H20.300V12H18.500Z" fill="#1a1a1a" /><path d="M4.500 0 0 5.500H2.700L1.500 9.500 6.500 4H3.700Z" fill="#1a1a1a" stroke="#e3f1fb" strokeWidth=".6" /></svg>
        </Slot>
        <div className="mb-[4px] ml-[8px] flex w-[78px] flex-col items-end text-[15px] leading-5">
          <Fit w={36}>10:46</Fit>
          <Fit w={78}>2024-07-14</Fit>
        </div>
        <Slot w={37}>
          <svg width="17" height="19" viewBox="0 0 17 18" preserveAspectRatio="none" fill="none" stroke="#1a1a1a" strokeWidth="1.400"><path d="M1.200 14.500 2.800 11V7A5.700 5.700 0 0 1 14.200 7V11L15.800 14.500ZM6.300 15Q8.500 18.500 10.700 15" /></svg>
        </Slot>
        <div className="w-[17px]" />
      </div>
    </footer>
  );
}

export default function App() {
  return (
    <div className="flex h-[1080px] w-[1920px] flex-col overflow-hidden font-['Open_Sans','Noto_Sans_CJK_SC',sans-serif]">
      <Browser />
      <main className="flex h-[869px] overflow-hidden">
        <div className="relative flex w-[1899px] flex-col bg-[#091831] pl-[195px]">
          <div className="absolute bottom-0 left-[282px] flex h-[40px] w-[1315px] overflow-hidden">
            <div className="w-[1027px] border-x border-[#1b2a66] bg-[#0e1c3c] pt-[12px] pl-[59px] font-[Liberation_Sans] text-[19px] leading-5 font-bold whitespace-pre text-[#e4e7ee]">
              g(       p_          );
            </div>
            <div className="ml-[36px] flex-1 border-x border-[#1b2a66] bg-[#0e1c3c]" />
          </div>
          <Modal />
        </div>
        <div className="flex w-[21px] flex-col items-center bg-[#f1f1f1] pt-[10px] pb-[10px]">
          <Arrow c="#a3a3a3" />
          <div className="mt-[6px] h-[376px] w-[17px] bg-[#c1c1c1]" />
          <div className="mt-auto"><Arrow down c="#505050" /></div>
        </div>
      </main>
      <Taskbar />
    </div>
  );
}
